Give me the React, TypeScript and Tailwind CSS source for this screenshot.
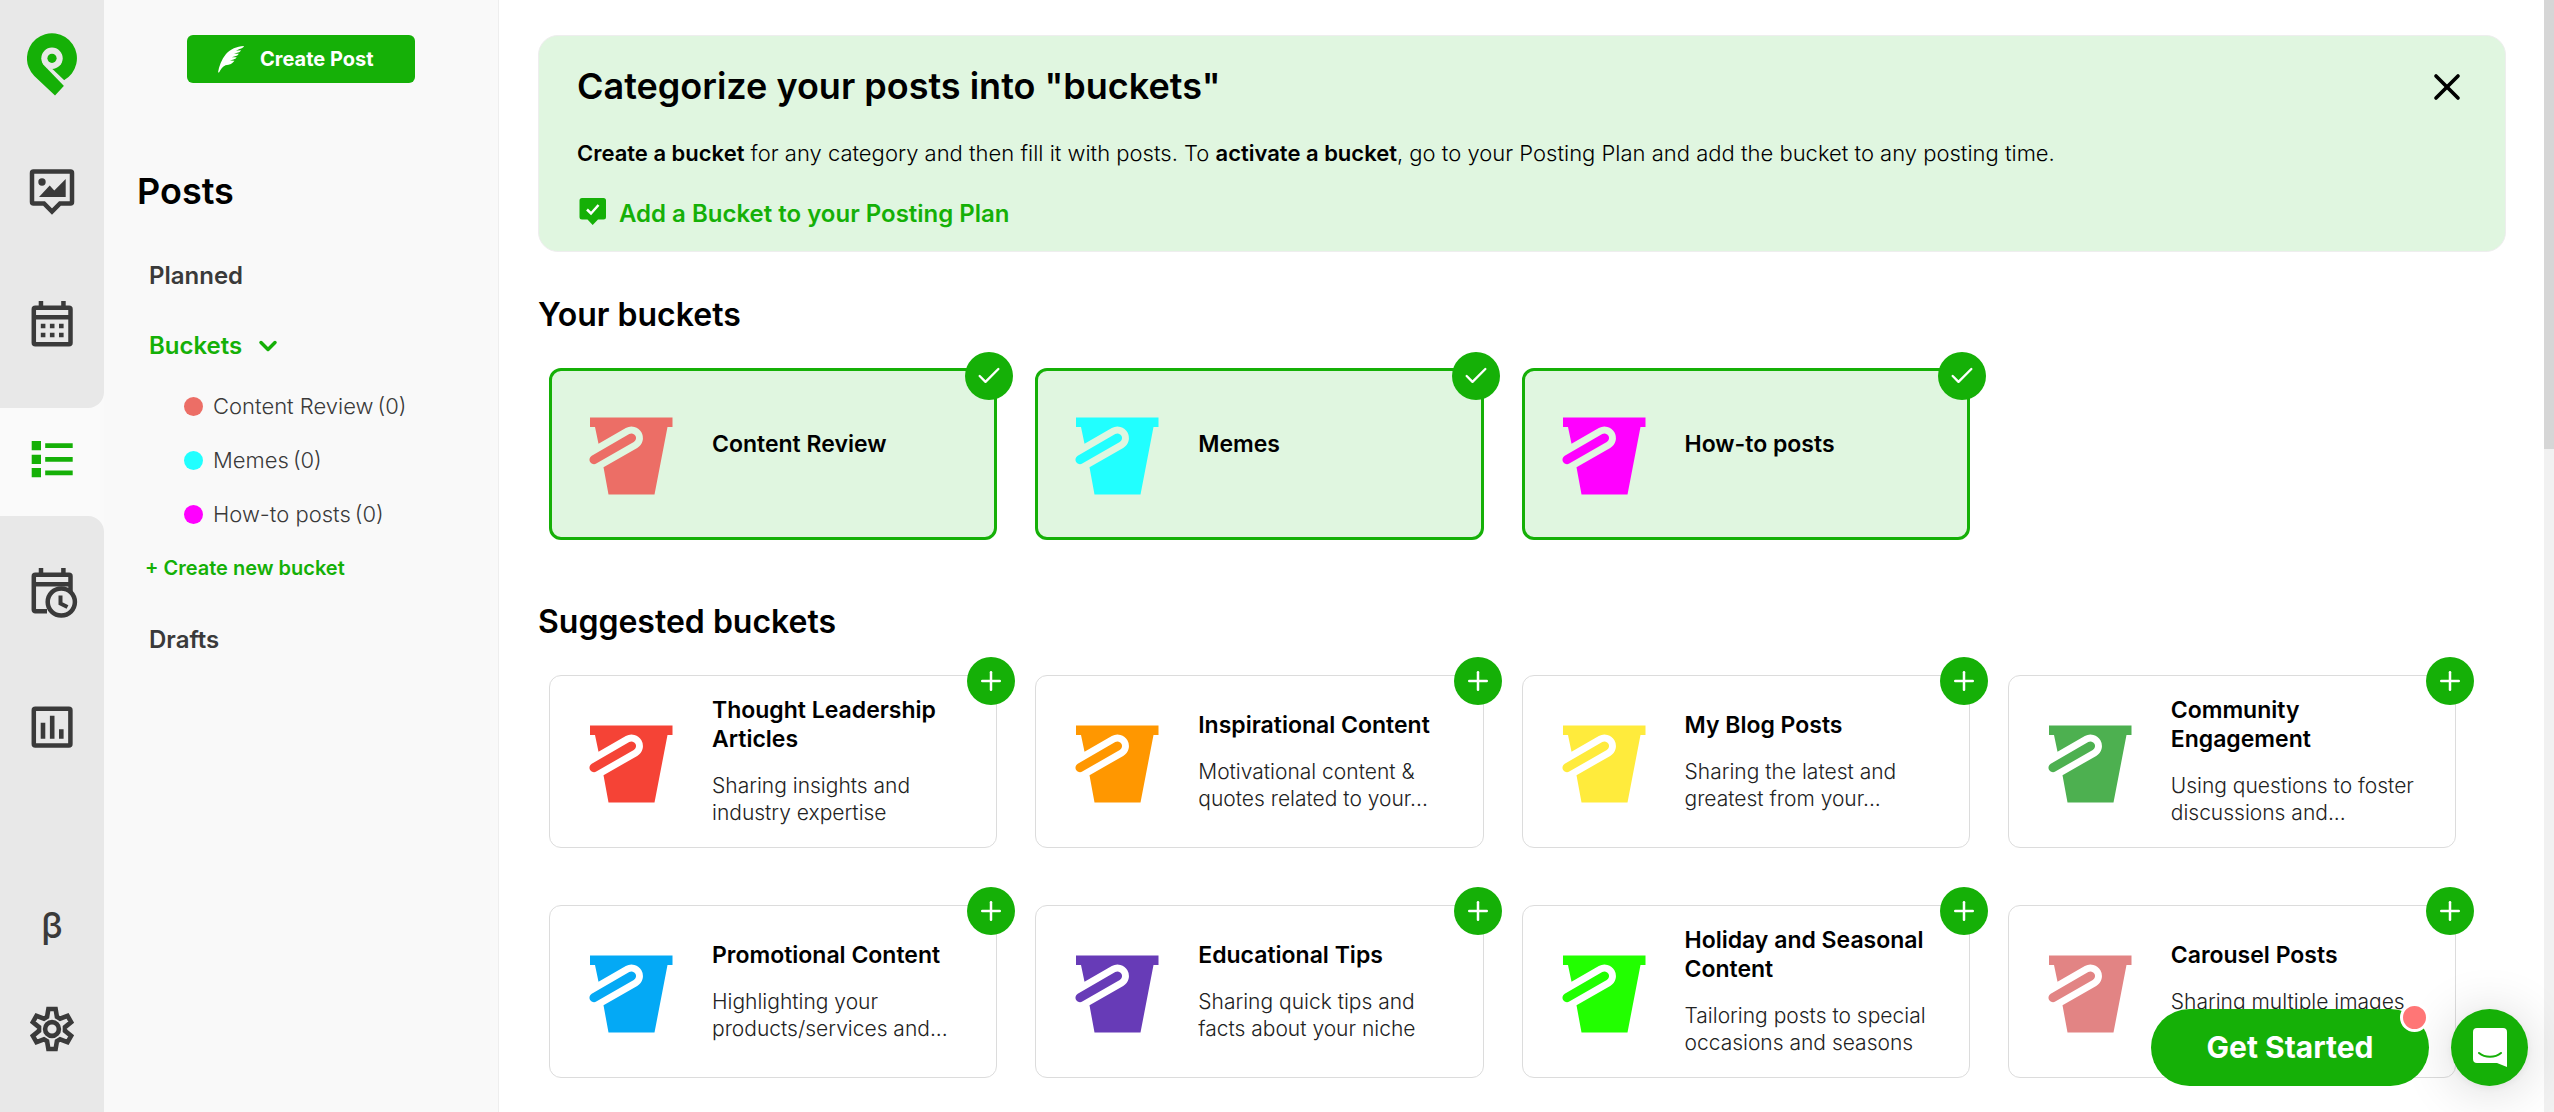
import { Check, ChevronDown, Plus, X } from 'lucide-react'

type Bucket = {
  name: string
  color: string
  description?: string
}

const yourBuckets: Bucket[] = [
  { name: 'Content Review', color: '#ec6e66' },
  { name: 'Memes', color: '#21ffff' },
  { name: 'How-to posts', color: '#ff00ff' },
]

const suggestedBuckets: Bucket[] = [
  { name: 'Thought Leadership\nArticles', color: '#f54336', description: 'Sharing insights and\nindustry expertise' },
  { name: 'Inspirational Content', color: '#ff9700', description: 'Motivational content &\nquotes related to your...' },
  { name: 'My Blog Posts', color: '#ffeb3c', description: 'Sharing the latest and\ngreatest from your...' },
  { name: 'Community\nEngagement', color: '#4db050', description: 'Using questions to foster\ndiscussions and...' },
  { name: 'Promotional Content', color: '#04a9f5', description: 'Highlighting your\nproducts/services and...' },
  { name: 'Educational Tips', color: '#673bb7', description: 'Sharing quick tips and\nfacts about your niche' },
  { name: 'Holiday and Seasonal\nContent', color: '#22ff00', description: 'Tailoring posts to special\noccasions and seasons' },
  { name: 'Carousel Posts', color: '#e28484', description: 'Sharing multiple images' },
]

function LogoIcon() {
  return (
    <svg width="50" height="63" viewBox="0 0 50 63" aria-hidden="true">
      <path d="M28 62.5 7.3 43A25 25 0 1 1 37 47.2L36.8 53z" fill="#15b007" />
      <path d="M17.4 32.8 36.8 52.8 40 50 37 47 25.7 36.3z" fill="#e8e8e8" />
      <circle cx="25" cy="25.3" r="10.7" fill="#e8e8e8" />
      <circle cx="25" cy="25.3" r="4.6" fill="#15b007" />
    </svg>
  )
}

function PreviewIcon() {
  return (
    <svg width="50" height="50" viewBox="0 0 50 50" fill="none" aria-hidden="true">
      <path d="M6.5 4.5h37a1.5 1.5 0 0 1 1.5 1.5v29a1.5 1.5 0 0 1-1.5 1.5H33L25 44.6l-8-8.1H6.5A1.5 1.5 0 0 1 5 35V6a1.5 1.5 0 0 1 1.5-1.5z" stroke="#3a3a3a" strokeWidth="4.5" />
      <circle cx="15" cy="15" r="3.7" fill="#3a3a3a" />
      <path d="M12 30 22.7 18.5 27.3 23.5 38.7 12v18z" fill="#3a3a3a" />
    </svg>
  )
}

function CalendarIcon() {
  return (
    <svg width="50" height="50" viewBox="0 0 50 50" fill="#3a3a3a" aria-hidden="true">
      <rect x="6.8" y="8.8" width="36.7" height="36.5" rx="1.5" fill="none" stroke="#3a3a3a" strokeWidth="4.5" />
      <path d="M11.7 2h4.5v5h-4.5zM34.2 2h4.5v5h-4.5zM7 16h36v4.4H7z" />
      <path d="M13.8 24.7h4.6v4.6h-4.6zM22.9 24.7h4.6v4.6h-4.6zM32 24.7h4.6v4.6H32zM13.8 33.7h4.6v4.6h-4.6zM22.9 33.7h4.6v4.6h-4.6zM32 33.7h4.6v4.6H32z" />
    </svg>
  )
}

function ListIcon() {
  return (
    <svg width="50" height="50" viewBox="0 0 50 50" fill="#15b007" aria-hidden="true">
      <path d="M4.7 7H14v9.3H4.7zM4.7 20.7H14V30H4.7zM4.7 34H14v9.3H4.7z" />
      <path d="M18.2 9.3h27.5V14H18.2zM18.2 23h27.5v4.7H18.2zM18.2 36.5h27.5v4.7H18.2z" />
    </svg>
  )
}

function ScheduleIcon() {
  return (
    <svg width="52" height="52" viewBox="0 0 52 52" fill="none" stroke="#3a3a3a" strokeWidth="4.5" aria-hidden="true">
      <path d="M21 45.3H9.3a1.5 1.5 0 0 1-1.5-1.5V10.3a1.5 1.5 0 0 1 1.5-1.5H43a1.5 1.5 0 0 1 1.5 1.5V26" />
      <path d="M8 18.2h36" />
      <path d="M15 2v6M37.4 2v6" />
      <circle cx="35.3" cy="36" r="13.6" fill="#e8e8e8" />
      <path d="M34.5 29.5v8l7 3.5" strokeWidth="4" />
    </svg>
  )
}

function ChartIcon() {
  return (
    <svg width="50" height="50" viewBox="0 0 50 50" fill="#3a3a3a" aria-hidden="true">
      <rect x="6.8" y="6.8" width="36.6" height="36.6" rx="1.5" fill="none" stroke="#3a3a3a" strokeWidth="4.5" />
      <path d="M13.7 20.7h4.6v16h-4.6zM22.9 13.7h4.6v23h-4.6zM32 27.3h4.6v9.4H32z" />
    </svg>
  )
}

function GearIcon() {
  return (
    <svg width="46" height="46" viewBox="-70 -70 140 140" fill="none" stroke="#3a3a3a" strokeWidth="14" aria-hidden="true">
      <path d="M-15-37-11-61H11L15-37 24.5-31.5 47.3-40 58.3-21 39.5-5.5V5.5L58.3 21 47.3 40 24.5 31.5 15 37 11 61H-11L-15 37-24.5 31.5-47.3 40-58.3 21-39.5 5.5V-5.5L-58.3-21-47.3-40-24.5-31.5z" />
      <circle r="21" />
    </svg>
  )
}

function FeatherIcon() {
  return (
    <svg width="27" height="27" viewBox="0 0 27 27" fill="#fff" aria-hidden="true">
      <path d="M0 26.5C1 20 3.5 13.5 8 8 12.5 3 18.5.5 26 0c-.3 1.3-2 2.5-4.5 3L18 4.7l5-.4c-.5 1.2-1.500 1.900-3 2.200l-4 1.300 4.800-.1c-.6 1.300-1.600 2-3 2.300l-4 1.200 4.900.1c-.7 1.300-1.700 1.900-3.200 2.100l-3.500 1 4.500.3c-2 2.800-4.500 4.300-9 4.500C4.500 20.500 3 23 1.200 26.300z" />
    </svg>
  )
}

function PlanIcon() {
  return (
    <svg width="30" height="32" viewBox="0 0 30 32" aria-hidden="true">
      <path d="M5 0h21.5A2.5 2.5 0 0 1 29 2.5V19a2.5 2.5 0 0 1-2.5 2.5H21L15.700 27l-5.200-5.500H5A2.500 2.500 0 0 1 2.500 19V2.500A2.500 2.500 0 0 1 5 0z" fill="#15b007" />
      <path d="M10 11.500l4 4L21.500 7" fill="none" stroke="#fff" strokeWidth="2.5" />
    </svg>
  )
}

function BucketIcon({ color }: { color: string }) {
  return (
    <svg width="84" height="78" viewBox="0 0 84 78" className="mt-1 shrink-0" aria-hidden="true">
      <path d="M1 .5H83.5V10H78.5L65.5 77.5H19.5L14.5 50.3 48.2 30.9A11.4 11.4 0 0 0 36.8 11.1L9.5 26.8 6 10H1z" fill={color} />
      <path d="M5 42.7 42.5 21" stroke={color} strokeWidth="9" strokeLinecap="round" />
    </svg>
  )
}

function BucketCard({ bucket, active = false }: { bucket: Bucket; active?: boolean }) {
  return (
    <li
      className={
        active
          ? 'relative flex h-[172px] items-center rounded-xl border-3 border-[#15b007] bg-[#e0f6e0] pl-[37px]'
          : 'relative flex h-[173px] items-center rounded-xl border border-[#dcdcdc] bg-white pl-[39px]'
      }
    >
      <BucketIcon color={bucket.color} />
      <div className="ml-[39px] pb-px whitespace-pre-line">
        <h3 className="mb-[18px] text-[23px] leading-[29px] font-semibold text-black">{bucket.name}</h3>
        {bucket.description && (
          <p className="min-h-[54px] text-[21px] leading-[27px] font-light text-[#222]">{bucket.description}</p>
        )}
      </div>
      <button
        type="button"
        aria-label={active ? 'Active bucket' : 'Add bucket'}
        className="absolute -top-[19px] -right-[19px] flex size-12 items-center justify-center rounded-full bg-[#15b007] text-white"
      >
        {active ? <Check size={28} strokeWidth={2} /> : <Plus size={30} strokeWidth={2} />}
      </button>
    </li>
  )
}

function Rail() {
  return (
    <nav className="flex w-[104px] shrink-0 flex-col bg-[#fafafa]">
      <div className="flex h-[408px] flex-col items-center rounded-br-2xl bg-[#e8e8e8] pt-[33px]">
        <a href="#home" aria-label="Home"><LogoIcon /></a>
        <a href="#preview" aria-label="Preview" className="mt-[71px]"><PreviewIcon /></a>
        <a href="#calendar" aria-label="Calendar" className="mt-[82px]"><CalendarIcon /></a>
      </div>
      <a href="#posts" aria-label="Posts" className="flex h-[108px] items-center justify-center pb-[6px]"><ListIcon /></a>
      <div className="flex flex-1 flex-col items-center rounded-tr-2xl bg-[#e8e8e8] pt-[50px] pb-[60px]">
        <a href="#plan" aria-label="Posting plan"><ScheduleIcon /></a>
        <a href="#analytics" aria-label="Analytics" className="mt-[84px]"><ChartIcon /></a>
        <a href="#beta" aria-label="Beta" className="mt-auto mb-14 text-[36px] leading-[50px] font-medium text-[#3a3a3a]">β</a>
        <a href="#settings" aria-label="Settings"><GearIcon /></a>
      </div>
    </nav>
  )
}

function Sidebar() {
  return (
    <aside className="flex w-[395px] shrink-0 flex-col border-r border-[#eee] bg-[#f9f9f9] pt-[35px]">
      <button
        type="button"
        className="ml-[83px] flex h-12 w-[228px] items-center rounded-md bg-[#15b007] pl-[31px] text-[20px] font-bold text-white"
      >
        <FeatherIcon />
        <span className="ml-[15px]">Create Post</span>
      </button>
      <h1 className="mt-[86px] ml-[33px] text-[36px] leading-[44px] font-semibold text-black">Posts</h1>
      <a href="#planned" className="mt-12 ml-[45px] text-[24px] leading-[30px] font-semibold text-[#3a3a3a]">Planned</a>
      <a href="#buckets" className="mt-10 ml-[45px] flex items-center gap-3 text-[24px] leading-[30px] font-semibold text-[#15b007]">
        Buckets
        <ChevronDown size={28} strokeWidth={3} />
      </a>
      <ul className="mt-[18px] ml-20">
        {yourBuckets.map((bucket) => (
          <li key={bucket.name} className="flex h-[54px] items-center text-[22px] font-light text-[#3a3a3a]">
            <span className="mr-[10px] size-[19px] rounded-full" style={{ backgroundColor: bucket.color }} />
            {bucket.name}
            <span className="ml-1">(0)</span>
          </li>
        ))}
      </ul>
      <button type="button" className="mt-3 ml-[41px] self-start text-[20px] leading-[30px] font-semibold text-[#15b007]">
        + Create new bucket
      </button>
      <a href="#drafts" className="mt-[42px] ml-[45px] text-[24px] leading-[30px] font-semibold text-[#3a3a3a]">Drafts</a>
    </aside>
  )
}

export default function App() {
  return (
    <div className="flex h-screen overflow-hidden bg-white font-['Inter',sans-serif]">
      <Rail />
      <Sidebar />

      <main className="min-w-0 flex-1 overflow-hidden pt-[35px] pr-[38px] pl-[39px]">
        {/* Intro banner */}
        <section className="relative h-[217px] rounded-[20px] border border-[#eee] bg-[#e0f6e0] px-[38px] pt-[25px]">
          <h2 className="text-[36px] leading-[50px] font-semibold text-black">Categorize your posts into "buckets"</h2>
          <p className="mt-[27px] text-[22px] leading-[30px] font-light text-black">
            <b className="font-semibold">Create a bucket</b> for any category and then fill it with posts. To{' '}
            <b className="font-semibold">activate a bucket</b>, go to your Posting Plan and add the bucket to any posting time.
          </p>
          <a href="#posting-plan" className="mt-[30px] flex items-center gap-3 text-[24px] leading-[30px] font-semibold text-[#15b007]">
            <PlanIcon />
            Add a Bucket to your Posting Plan
          </a>
          <button type="button" aria-label="Close" className="absolute top-[29px] right-[36px] text-black">
            <X size={44} strokeWidth={2} />
          </button>
        </section>

        <h2 className="mt-[42px] text-[32px] leading-[42px] font-semibold text-black">Your buckets</h2>
        <ul className="mt-8 mr-[50px] ml-[11px] grid grid-cols-4 gap-[38px]">
          {yourBuckets.map((bucket) => (
            <BucketCard key={bucket.name} bucket={bucket} active />
          ))}
        </ul>

        <h2 className="mt-[61px] text-[32px] leading-[42px] font-semibold text-black">Suggested buckets</h2>
        <ul className="mt-8 mr-[50px] ml-[11px] grid grid-cols-4 gap-x-[38px] gap-y-[57px]">
          {suggestedBuckets.map((bucket) => (
            <BucketCard key={bucket.name} bucket={bucket} />
          ))}
        </ul>
      </main>

      {/* Scroll track */}
      <div className="w-[10px] shrink-0 bg-[#f1f1f1]">
        <div className="h-[449px] bg-[#d6d6d6]" />
      </div>

      {/* Floating help controls */}
      <div className="fixed right-[26px] bottom-[26px] flex gap-[22px]">
        <button type="button" className="relative h-[77px] w-[278px] rounded-full bg-[#15b007] text-[30px] font-bold text-white">
          Get Started
          <span className="absolute -top-[6px] right-0 size-[29px] rounded-full border-3 border-white bg-[#ff7676]" />
        </button>
        <button
          type="button"
          aria-label="Open chat"
          className="flex size-[77px] items-center justify-center rounded-full bg-[#15b007] shadow-[0_2px_10px_rgba(0,0,0,0.06),0_4px_52px_rgba(0,0,0,0.16)]"
        >
          <svg width="34" height="39" viewBox="0 0 34 39" aria-hidden="true">
            <path d="M4 0h26a4 4 0 0 1 4 4v35l-10-4H4a4 4 0 0 1-4-4V4a4 4 0 0 1 4-4z" fill="#fff" />
            <path d="M6 25c6 5 16 5 22 0" fill="none" stroke="#15b007" strokeWidth="2" strokeLinecap="round" />
          </svg>
        </button>
      </div>
    </div>
  )
}
